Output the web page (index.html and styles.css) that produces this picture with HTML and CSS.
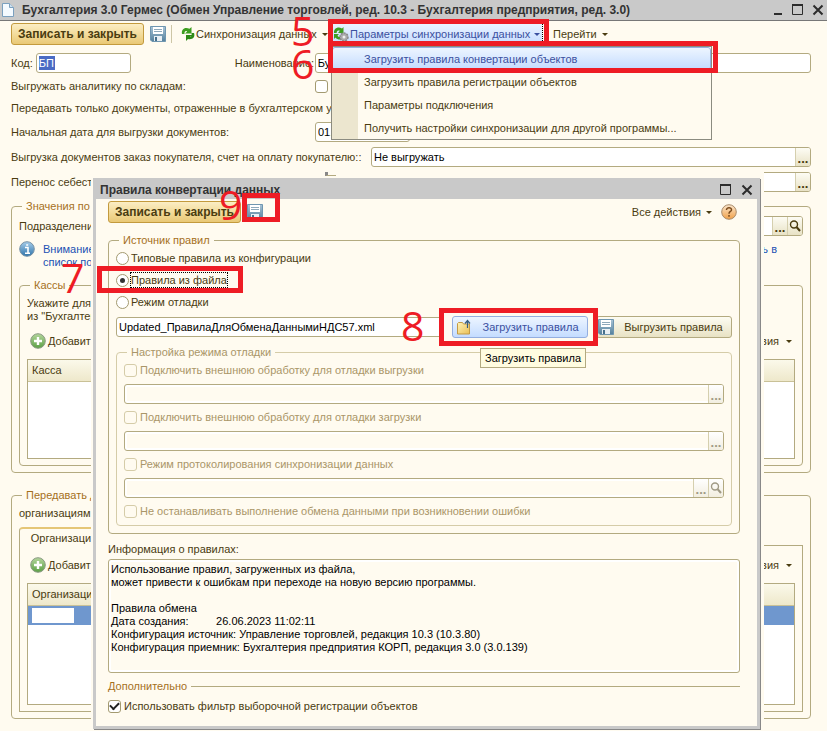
FILE: index.html
```html
<!DOCTYPE html>
<html lang="ru">
<head>
<meta charset="utf-8">
<title>Бухгалтерия 3.0 Гермес</title>
<link rel="stylesheet" href="styles.css">
</head>
<body>
<svg class="defs" aria-hidden="true">
  <defs>
    <linearGradient id="gBlue" x1="0" y1="0" x2="0" y2="1"><stop offset="0" stop-color="#a9c4d6"/><stop offset="1" stop-color="#54809c"/></linearGradient>
    <linearGradient id="gInfo" x1="0" y1="0" x2="0" y2="1"><stop offset="0" stop-color="#a6cdea"/><stop offset="1" stop-color="#2f74ab"/></linearGradient>
    <linearGradient id="gGreen" x1="0" y1="0" x2="0" y2="1"><stop offset="0" stop-color="#b4d69c"/><stop offset="1" stop-color="#5ba045"/></linearGradient>
    <linearGradient id="gHelp" x1="0" y1="0" x2="0" y2="1"><stop offset="0" stop-color="#fbe6cc"/><stop offset="1" stop-color="#f0a048"/></linearGradient>
    <linearGradient id="gFolder" x1="0" y1="0" x2="1" y2="1"><stop offset="0" stop-color="#fff3b8"/><stop offset="1" stop-color="#e9bf55"/></linearGradient>
    <symbol id="save" viewBox="0 0 16 16">
      <path d="M.5.5h15v15H2L.5 14z" fill="url(#gBlue)" stroke="#6f96b0"/>
      <path d="M3 1h10v7H3z" fill="#fff"/><path d="M4 3.500h8M4 5.500h8" stroke="#8ea9bb"/>
      <path d="M4 10h8v5H4z" fill="#e8eff4"/><path d="M5 11h2v4H5z" fill="#47708c"/>
    </symbol>
    <symbol id="sync" viewBox="0 0 16 16">
      <path d="M2 8C1 3 5 .5 9.500 2.800L11.500 1v6.500H5L7.200 5.500C5.500 4.500 4.300 5.500 4.500 8z" fill="#3d9e20"/>
      <path d="M14 7c1.500 4-1.500 7-6 6l-2 2V9h6.500L9.800 11c1.500 0 2.200-1.500 1.700-4z" fill="#2d8a16"/>
    </symbol>
    <symbol id="syncgear" viewBox="0 0 16 16">
      <path d="M1 7C.5 2.500 5 0 9 2.500L10.500 1v6H5l1.800-2.200C5 3.800 3.500 5 3.700 7z" fill="#3d9e20"/>
      <path d="M1 8h5l-1.500 1.600C5 11 6 11 7 11v2.500c-2 0-3.500-.5-4.500-2L1 13z" fill="#3d9e20"/>
      <circle cx="11" cy="11" r="4" fill="#aaa" stroke="#888" stroke-width="1.500" stroke-dasharray="2 1"/><circle cx="11" cy="11" r="1.500" fill="#eee"/>
    </symbol>
    <symbol id="add" viewBox="0 0 16 16">
      <circle cx="8" cy="8" r="7.300" fill="url(#gGreen)" stroke="#8a9a83"/>
      <path d="M8 4v8M4 8h8" stroke="#fff" stroke-width="2.400"/>
    </symbol>
    <symbol id="info" viewBox="0 0 16 16">
      <circle cx="8" cy="8" r="7.300" fill="url(#gInfo)" stroke="#7892a6"/>
      <path d="M6 6.500h3V12M6 12.300h5M7.200 4h2" fill="none" stroke="#fff" stroke-width="1.600"/>
    </symbol>
    <symbol id="help" viewBox="0 0 16 16">
      <circle cx="8" cy="8" r="7.300" fill="url(#gHelp)" stroke="#a98c6c"/>
      <path d="M5.500 6C5.500 2.800 10.700 3 10.500 6 10.400 7.500 8 7.500 8 9.700M8 11v1.700" fill="none" stroke="#7a4a1c" stroke-width="1.500"/>
    </symbol>
    <symbol id="lens" viewBox="0 0 12 12">
      <circle cx="5" cy="4.500" r="3.500" fill="none" stroke="currentColor" stroke-width="1.400"/><path d="M7.500 7l3.500 4" stroke="currentColor" stroke-width="2"/>
    </symbol>
    <symbol id="folder" viewBox="0 0 16 16">
      <path d="M1.500 4.500l1-1h4l1 1.500h6v10h-12z" fill="url(#gFolder)" stroke="#c39b45"/>
      <path d="M11.500 9V2M9 4.500L11.500 1.500 14 4.500" fill="none" stroke="#365d80" stroke-width="1.200"/>
    </symbol>
    <symbol id="close" viewBox="0 0 12 12"><path d="M1.500 1.500l9 9M10.500 1.500l-9 9" stroke="#2c2c2c" stroke-width="2"/></symbol>
    <symbol id="max" viewBox="0 0 12 12"><path d="M.5.5h10v10H.5z" fill="none" stroke="#2c2c2c"/><path d="M0 1h11" stroke="#2c2c2c" stroke-width="2"/></symbol>
    <symbol id="min" viewBox="0 0 12 12"><path d="M2 10h8" stroke="#2c2c2c" stroke-width="2"/></symbol>
    <symbol id="page" viewBox="0 0 12 14"><path d="M.5.5h7l4 4v9H.5z" fill="#f4faff" stroke="#7ba0bf"/><path d="M7.500.5v4h4" fill="#cfe2f0" stroke="#7ba0bf"/></symbol>
  </defs>
</svg>

<main class="window">
  <header class="titlebar">
    <svg class="page-icon"><use href="#page"/></svg>
    <h1>Бухгалтерия 3.0 Гермес (Обмен Управление торговлей, ред. 10.3 - Бухгалтерия предприятия, ред. 3.0)</h1>
    <button class="sys" aria-label="Свернуть"><svg class="i12"><use href="#min"/></svg></button>
    <button class="sys" aria-label="Развернуть"><svg class="i12"><use href="#max"/></svg></button>
    <button class="sys" aria-label="Закрыть"><svg class="i12"><use href="#close"/></svg></button>
  </header>

  <nav class="toolbar">
    <button class="primary">Записать и закрыть</button>
    <button class="flat save" aria-label="Записать"><svg class="i16"><use href="#save"/></svg></button>
    <span class="sep"></span>
    <button class="flat sync"><svg class="i16"><use href="#sync"/></svg>Синхронизация данных<i class="caret"></i></button>
    <div class="menu-holder">
      <button class="flat active"><svg class="i16"><use href="#syncgear"/></svg>Параметры синхронизации данных<i class="caret"></i></button>
      <div class="menu">
        <button class="item selected">Загрузить правила конвертации объектов</button>
        <button class="item">Загрузить правила регистрации объектов</button>
        <button class="item">Параметры подключения</button>
        <button class="item">Получить настройки синхронизации для другой программы...</button>
      </div>
    </div>
    <button class="flat">Перейти<i class="caret"></i></button>
  </nav>

  <form class="form">
    <div class="row">
      <label for="code">Код:</label>
      <span class="field code"><span class="marked"><input id="code" value="БП"></span></span>
      <label for="name" class="name-label">Наименование:</label>
      <span class="field grow"><input id="name" value="Бухгалтерия"></span>
    </div>
    <div class="row short"><label for="stock" class="wide">Выгружать аналитику по складам:</label><input type="checkbox" id="stock"></div>
    <div class="row short"><span>Передавать только документы, отраженные в бухгалтерском учете:</span></div>
    <div class="row tall"><label for="date" class="wide">Начальная дата для выгрузки документов:</label><span class="field date"><input id="date" value="01.01"></span></div>
    <div class="row"><label for="orders" class="wider">Выгрузка документов заказ покупателя, счет на оплату покупателю::</label>
      <span class="field grow"><input id="orders" value="Не выгружать"><button type="button" class="pick dots" aria-label="Выбрать">...</button></span></div>
    <div class="row tall"><label for="cost" class="wider">Перенос себестоимости</label>
      <span class="field grow"><input id="cost"><button type="button" class="pick dots" aria-label="Выбрать">...</button></span></div>

    <fieldset class="group">
      <legend>Значения по умолчанию</legend>
      <div class="row dept"><label for="dept" class="wide">Подразделение:</label>
        <span class="field grow"><input id="dept"><button type="button" class="pick dots" aria-label="Выбрать">...</button><button type="button" class="pick" aria-label="Открыть"><svg class="i12"><use href="#lens"/></svg></button></span></div>
      <div class="notice"><svg class="i16"><use href="#info"/></svg><a href="#">Внимание<br>список по</a><a href="#" class="end">ь в</a></div>
      <fieldset class="group inner">
        <legend>Кассы</legend>
        <p class="hint">Укажите для<br>из "Бухгалтерии</p>
        <div class="commands"><button type="button" class="flat"><svg class="i16"><use href="#add"/></svg>Добавить</button><button type="button" class="flat">Все действия<i class="caret"></i></button></div>
        <div class="grid"><table><thead><tr><th>Касса</th></tr></thead></table></div>
      </fieldset>
    </fieldset>

    <fieldset class="group second">
      <legend>Передавать данные</legend>
      <p class="orgs">организациям</p>
      <div class="tabs"><button type="button" class="tab">Организации</button></div>
      <div class="panel">
        <div class="commands"><button type="button" class="flat"><svg class="i16"><use href="#add"/></svg>Добавить</button><button type="button" class="flat">Все действия<i class="caret"></i></button></div>
        <div class="grid large"><table><thead><tr><th>Организация</th></tr></thead><tbody><tr><td><span class="blank"></span></td></tr></tbody></table></div>
      </div>
    </fieldset>
  </form>

  <div class="stub"></div>

  <section class="dialog" role="dialog" aria-labelledby="dlg-title">
    <header class="titlebar">
      <h2 id="dlg-title">Правила конвертации данных</h2>
      <button class="sys" aria-label="Развернуть"><svg class="i12"><use href="#max"/></svg></button>
      <button class="sys" aria-label="Закрыть"><svg class="i12"><use href="#close"/></svg></button>
    </header>
    <form class="body">
      <div class="dialog-tools">
        <button type="button" class="primary">Записать и закрыть</button>
        <button type="button" class="flat save" aria-label="Записать"><svg class="i16"><use href="#save"/></svg></button>
        <button type="button" class="flat all">Все действия<i class="caret"></i></button>
        <button type="button" class="flat" aria-label="Справка"><svg class="i16"><use href="#help"/></svg></button>
      </div>
      <fieldset class="group source">
        <legend>Источник правил</legend>
        <label class="option"><input type="radio" name="src"><span>Типовые правила из конфигурации</span></label>
        <label class="option"><input type="radio" name="src" checked><span class="focused">Правила из файла</span></label>
        <label class="option"><input type="radio" name="src"><span>Режим отладки</span></label>
        <div class="file">
          <span class="field grow"><input aria-label="Файл правил" value="Updated_ПравилаДляОбменаДаннымиНДС57.xml"></span>
          <button type="button" class="btn load"><svg class="i16"><use href="#folder"/></svg><span>Загрузить правила</span></button>
          <button type="button" class="btn"><svg class="i16"><use href="#save"/></svg><span>Выгрузить правила</span></button>
          <span class="tooltip" role="tooltip">Загрузить правила</span>
        </div>
        <fieldset class="group debug" disabled>
          <legend>Настройка режима отладки</legend>
          <label class="check"><input type="checkbox">Подключить внешнюю обработку для отладки выгрузки</label>
          <span class="field"><input aria-label="Обработка выгрузки"><button type="button" class="pick dots">...</button></span>
          <label class="check"><input type="checkbox">Подключить внешнюю обработку для отладки загрузки</label>
          <span class="field"><input aria-label="Обработка загрузки"><button type="button" class="pick dots">...</button></span>
          <label class="check"><input type="checkbox">Режим протоколирования синхронизации данных</label>
          <span class="field"><input aria-label="Файл протокола"><button type="button" class="pick dots">...</button><button type="button" class="pick" aria-label="Открыть"><svg class="i12"><use href="#lens"/></svg></button></span>
          <label class="check"><input type="checkbox">Не останавливать выполнение обмена данными при возникновении ошибки</label>
        </fieldset>
      </fieldset>
      <label for="rules" class="rules-label">Информация о правилах:</label>
      <textarea id="rules" readonly>Использование правил, загруженных из файла,
может привести к ошибкам при переходе на новую версию программы.

Правила обмена
Дата создания:         26.06.2023 11:02:11
Конфигурация источник: Управление торговлей, редакция 10.3 (10.3.80)
Конфигурация приемник: Бухгалтерия предприятия КОРП, редакция 3.0 (3.0.139)</textarea>
      <h3 class="more">Дополнительно</h3>
      <label class="check"><input type="checkbox" checked>Использовать фильтр выборочной регистрации объектов</label>
    </form>
  </section>

  <div class="mark m5"></div><div class="mark m6"></div><div class="mark m7"></div><div class="mark m8"></div><div class="mark m9"></div>
  <span class="num n5">5</span><span class="num n6">6</span><span class="num n7">7</span><span class="num n8">8</span><span class="num n9">9</span>
</main>
</body>
</html>
```
FILE: styles.css
```css
* { box-sizing: border-box; }
:root {
  --cream: #fffbf0;
  --line: #b3aa80;
  --text: #4a3c10;
  --frame: #c9c9c9;
  --red: #ee1c25;
}
body { margin: 0; background: #fff; font: 11px/14px "Liberation Sans", Arial, sans-serif; color: var(--text); }
.defs { position: absolute; width: 0; height: 0; }
button, input, textarea { font: inherit; color: inherit; margin: 0; }
button { padding: 0; border: 0; background: none; white-space: nowrap; }
svg { flex: none; display: block; }
.i16 { width: 16px; height: 16px; }
.i12 { width: 12px; height: 12px; }
h1, h2, h3, p { margin: 0; font-size: inherit; }

.window { position: relative; margin-right: 3px; min-height: 100vh; background: var(--cream); overflow: hidden; }
.titlebar { display: flex; align-items: center; gap: 8px; height: 21px; padding: 0 3px 0 2px; background: var(--frame); color: #333; border-bottom: 1px solid #777; }
.titlebar h1, .titlebar h2 { flex: 1; font-size: 12px; white-space: nowrap; }
.page-icon { width: 12px; height: 14px; }
.sys { display: flex; }

.toolbar { display: flex; align-items: center; height: 26px; padding-left: 11px; }
.primary { width: 133px; height: 22px; border: 1px solid #c39a3d; border-radius: 3px; background: linear-gradient(#fbedc4, #f3dc9c 50%, #e9c876); font-weight: bold; font-size: 12px; }
.flat { display: flex; align-items: center; height: 20px; }
.save { margin-left: 6px; }
.sep { width: 1px; height: 18px; margin: 0 8px 0 5px; background: #cdc6a6; }
.sync { width: 149px; }
.caret { margin-left: 5px; border: 3px solid transparent; border-top-color: currentColor; border-bottom: 0; }
.menu-holder { position: relative; width: 209px; margin: 0 11px 0 4px; }
.active { gap: 1px; width: 209px; outline: 1px dotted #000; background: linear-gradient(#eaf3ff, #c6dcff); color: #3b50a0; }
.active .caret { margin-left: 3px; }
.menu { position: absolute; z-index: 1; top: 22px; left: -2px; width: 381px; border: 1px solid #8b8b80; background: linear-gradient(90deg, #ece6cf 26px, var(--cream) 26px); }
.item { display: block; width: 100%; height: 23px; padding-left: 32px; text-align: left; }
.item.selected { border: 1px solid #93aee0; border-radius: 3px; padding-left: 31px; background: linear-gradient(#edf5ff, #c4dcff); color: #3b50a0; }

.form { display: flex; flex-direction: column; gap: 4px; padding: 6px 16px 0 11px; }
.row { display: flex; align-items: center; height: 20px; white-space: nowrap; }
.short { height: 18px; }
.tall { height: 22px; }
.wide { width: 304px; }
.wider { width: 360px; }
.field { display: flex; height: 20px; border: 1px solid var(--line); border-radius: 3px; background: #fff; overflow: hidden; color: #000; }
.field input { flex: 1; min-width: 0; width: 100%; padding: 0 2px; border: 0; background: none; outline: 0; }
.grow { flex: 1; }
.code { width: 95px; margin-left: 3px; padding: 2px; }
.marked { display: flex; width: 16px; background: #4a6bc4; color: #fff; }
.marked input { padding: 0; }
.name-label { width: 80px; margin-left: 104px; }
.date { width: 95px; }
.pick { display: grid; place-items: center; width: 15px; border-left: 1px solid #d5cfae; background: linear-gradient(#fdfcf4, #e8e2c5); color: var(--text); font-weight: bold; }
.dots { font-size: 13px; padding-top: 3px; }

input[type=checkbox], input[type=radio] { appearance: none; flex: none; display: grid; place-items: center; width: 13px; height: 13px; border: 1px solid #a39a70; border-radius: 3px; background: #fff; }
input[type=radio] { border-radius: 50%; }
input[type=radio]:checked::before { content: ""; width: 5px; height: 5px; border-radius: 50%; background: #333; }
input[type=checkbox]:checked::before { content: ""; width: 7px; height: 4px; margin-bottom: 2px; border: solid #222; border-width: 0 0 2px 2px; transform: rotate(-45deg); }

.group { min-width: 0; margin: 2px 0 0; padding: 3px 7px 6px; border: 1px solid var(--line); border-radius: 4px; }
.group legend { margin-left: 3px; padding: 0 4px; line-height: 14px; color: #a5701c; }
.notice { display: flex; gap: 8px; margin-top: 5px; height: 28px; line-height: 13px; }
.notice a { color: #1c51b4; text-decoration: none; padding-top: 2px; }
.notice .end { margin: 0 26px 0 auto; }
.inner { margin-top: 9px; }
.hint { margin-top: 2px; line-height: 13px; }
.commands { display: flex; justify-content: space-between; margin: 8px 3px; }
.commands .flat { gap: 2px; }
.grid { height: 100px; border: 1px solid var(--line); background: #fff; }
.large { height: 122px; }
table { width: 100%; border-collapse: collapse; }
th { height: 21px; padding: 0 4px; border-bottom: 1px solid #c9c197; background: linear-gradient(#fbf9ea, #eee8cb); font-weight: normal; text-align: left; }
td { height: 19px; padding: 2px 4px; background: #6f97ce; }
.blank { display: block; width: 42px; height: 15px; background: #fff; }
.second { margin-top: 11px; padding-top: 4px; }
.orgs { margin-bottom: 7px; }
.tabs { display: flex; }
.tab { width: 90px; height: 19px; margin-bottom: -1px; border: 1px solid var(--line); border-top: 2px solid #e5c676; border-bottom: 0; border-radius: 4px 0 0; background: var(--cream); }
.panel { padding: 1px 7px 6px; border: 1px solid var(--line); }

.stub { position: absolute; top: 172px; left: 325px; width: 72px; height: 4px; border-left: 3px solid #888; border-bottom: 1px solid var(--line); background: linear-gradient(90deg, var(--cream) 24px, #ece6cf 24px); }

.dialog { position: absolute; top: 178px; left: 93px; right: 67px; border: solid var(--frame); border-width: 0 3px 3px; background: var(--cream); box-shadow: 1px 1px 0 #888, 4px 0 0 var(--cream), -2px 0 0 var(--cream); }
.dialog::before { content: ""; position: absolute; top: -6px; left: 240px; right: -7px; height: 6px; background: var(--cream); }
.dialog .titlebar { padding: 3px 4px 0 4px; border-bottom-color: var(--frame); gap: 9px; }
.body { padding: 2px 17px 11px 12px; }
.dialog-tools { display: flex; align-items: center; height: 22px; }
.all { margin: 0 9px 0 auto; }
.dialog-tools .flat:last-child { margin-right: 3px; }
.source { margin-top: 10px; padding: 0 7px 7px; }
.option, .check { display: flex; align-items: center; gap: 2px; height: 22px; }
.check { height: 18px; gap: 3px; }
.focused { outline: 1px dotted #000; }
.file { position: relative; display: flex; align-items: center; margin-top: 3px; }
.btn { display: flex; align-items: center; gap: 8px; height: 22px; padding: 0 6px 0 1px; border: 1px solid var(--line); border-radius: 3px; background: linear-gradient(#fdfcf2, #e8e2c4); width: 136px; margin-left: 8px; }
.btn span { flex: 1; }
.load { padding-left: 3px; border-color: #93aee0; background: linear-gradient(#edf5ff, #c4dcff); color: #3b50a0; }
.tooltip { position: absolute; z-index: 1; top: 32px; right: 146px; padding: 2px 4px; border: 1px solid var(--line); background: #fffce0; color: #000; }
.debug { margin-top: 7px; padding: 2px 7px 5px; border-color: #d5cca8; color: #aa9668; }
.debug legend { color: #aa9668; }
.debug .field { margin: 5px 0 4px; background: var(--cream); box-shadow: inset 0 0 0 2px #fff; }
.debug .pick { color: #a09a85; background: linear-gradient(#fff, #f2eee0); }
.debug input[type=checkbox] { border-color: #d5cca8; background: var(--cream); }
.rules-label { display: block; margin: 8px 0 3px; }
textarea { display: block; width: 100%; height: 114px; padding: 3px 2px; resize: none; border: 1px solid var(--line); border-radius: 3px; background: var(--cream); box-shadow: inset 0 0 0 2px #fff; line-height: 13px; color: #000; outline: 0; overflow: hidden; }
.more { display: flex; align-items: center; gap: 4px; margin: 6px 0 4px; font-weight: normal; color: #a5701c; }
.more::after { content: ""; flex: 1; border-top: 1px solid var(--line); }

.mark { position: absolute; z-index: 2; border: 5px solid var(--red); pointer-events: none; }
.m5 { left: 328px; top: 19px; width: 221px; height: 27px; }
.m6 { left: 328px; top: 41px; width: 390px; height: 32px; }
.m7 { left: 97px; top: 266px; width: 146px; height: 27px; }
.m8 { left: 439px; top: 308px; width: 159px; height: 38px; }
.m9 { left: 242px; top: 193px; width: 38px; height: 29px; }
.num { position: absolute; z-index: 2; font: 500 41px/40px "Open Sans", "Noto Sans", sans-serif; color: var(--red); }
.n5 { left: 291px; top: 10px; }
.n6 { left: 291px; top: 43px; }
.n7 { left: 61px; top: 257px; }
.n8 { left: 401px; top: 305px; }
.n9 { left: 219px; top: 184px; }
```
